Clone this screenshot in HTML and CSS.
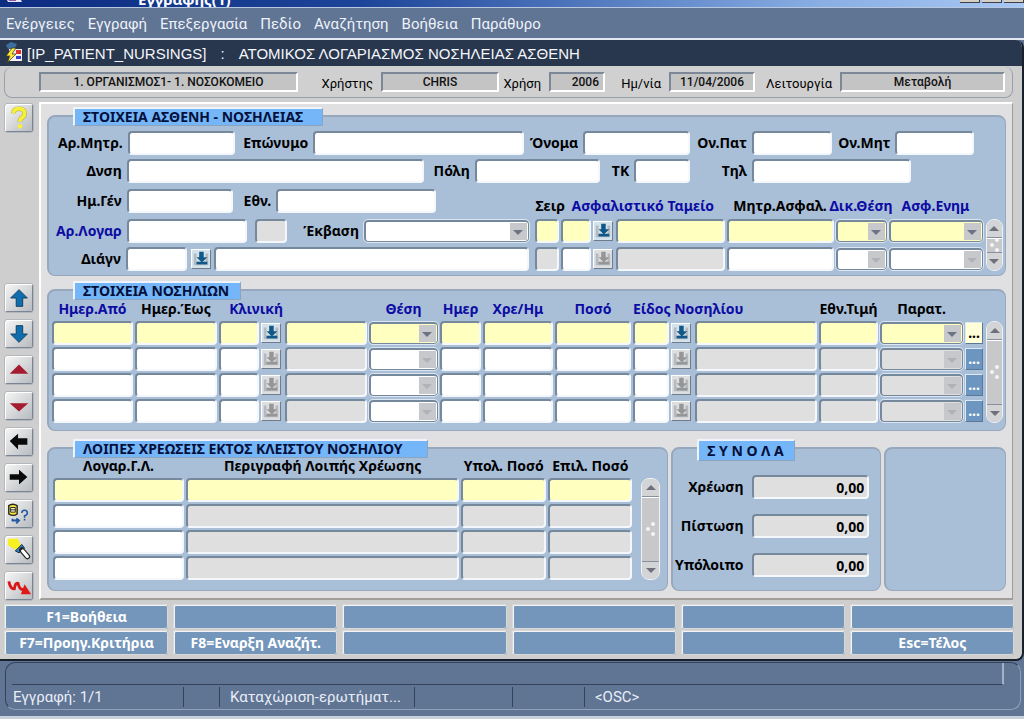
FILE: index.html
```html
<!DOCTYPE html>
<html lang="el">
<head>
<meta charset="utf-8">
<title>Ατομικός λογαριασμός νοσηλείας ασθενή</title>
<link rel="stylesheet" href="styles.css">
</head>
<body>
<svg class="defs" aria-hidden="true">
  <symbol id="i-pick" viewBox="0 0 20 20"><path d="M2 4h3v10h10V4h3v13H2z" fill="#b4bac0"/><path d="M8 2h5v6h4l-6 6-6-6h3z" fill="currentColor"/><path d="M5 13h12v3H5z" fill="currentColor"/></symbol>
  <symbol id="i-up" viewBox="0 0 28 28"><path d="M14 5l9 9h-5v9h-7v-9H5z" fill="#0f6fae" stroke="#123a5c"/></symbol>
  <symbol id="i-down" viewBox="0 0 28 28"><path d="M14 23l9-9h-5V5h-7v9H5z" fill="#0f6fae" stroke="#123a5c"/></symbol>
</svg>
<div class="app">
  <header class="titlebar">
    <svg class="title-icon" viewBox="0 0 18 6"><path d="M1 0h14l2 4H3z" fill="#e8e2f4"/><path d="M3 1h8v2H4z" fill="#8a5aa8"/></svg>
    <span class="title-text">Εγγραφής(1)</span>
    <div class="win-buttons"><span></span><span></span><span></span></div>
  </header>
  <nav class="menubar">
    <button>Ενέργειες</button><button>Εγγραφή</button><button>Επεξεργασία</button><button>Πεδίο</button><button>Αναζήτηση</button><button>Βοήθεια</button><button>Παράθυρο</button>
  </nav>

  <main class="window">
    <div class="window-title">
      <svg class="form-icon" viewBox="0 0 20 22"><path d="M2 3l5-3 6 2-2 4-7 1z" fill="#3c6f9f"/><path d="M5 7h13v12H5z" fill="#f4f0f4"/><path d="M12 8h5v4h-5z" fill="#e03030"/><path d="M12 14h5v3h-5z" fill="#3344cc"/><path d="M8 6l-6 8h4l-3 7 9-9H8l4-6z" fill="#ffe838" stroke="#3a3010" stroke-width=".7"/></svg>
      <h1><span>[IP_PATIENT_NURSINGS]</span><span>:</span><span>ΑΤΟΜΙΚΟΣ ΛΟΓΑΡΙΑΣΜΟΣ ΝΟΣΗΛΕΙΑΣ ΑΣΘΕΝΗ</span></h1>
    </div>

    <div class="info">
      <input class="info-field" aria-label="Οργανισμός" readonly value="1. ΟΡΓΑΝΙΣΜΟΣ1- 1. ΝΟΣΟΚΟΜΕΙΟ">
      <label for="user">Χρήστης</label><input class="info-field" id="user" readonly value="CHRIS">
      <label for="year">Χρήση</label><input class="info-field end" id="year" readonly value="2006">
      <label for="date">Ημ/νία</label><input class="info-field" id="date" readonly value="11/04/2006">
      <label for="mode">Λειτουργία</label><input class="info-field" id="mode" readonly value="Μεταβολή">
    </div>

    <div class="body">
      <aside class="tools">
        <button aria-label="Βοήθεια"><svg viewBox="0 0 28 28"><path d="M8 9q0-5 6-5t6 5q0 3-3 5-2 1-2 4" fill="none" stroke="#a8a838" stroke-width="5"/><path d="M8 9q0-5 6-5t6 5q0 3-3 5-2 1-2 4" fill="none" stroke="#f6f03c" stroke-width="4"/><circle cx="15" cy="23" r="2.5" fill="#f6f03c"/></svg></button>
        <button class="push" aria-label="Πάνω"><svg><use href="#i-up"/></svg></button>
        <button aria-label="Κάτω"><svg><use href="#i-down"/></svg></button>
        <button aria-label="Προηγούμενη σελίδα"><svg viewBox="0 0 28 28"><path d="M14 8l10 10H4z" fill="#a41c30"/></svg></button>
        <button aria-label="Επόμενη σελίδα"><svg viewBox="0 0 28 28"><path d="M14 20l10-9H4z" fill="#a41c30"/></svg></button>
        <button aria-label="Πίσω"><svg viewBox="0 0 28 28"><path d="M4 13l9-8v5h10v7H13v5z" fill="#0a0a0a"/></svg></button>
        <button aria-label="Εμπρός"><svg viewBox="0 0 28 28"><path d="M23 13l-9-8v5H4v6h10v5z" fill="#0a0a0a"/></svg></button>
        <button aria-label="Ερώτημα"><svg viewBox="0 0 28 28"><path d="M3 5q4-3 9 0v9q-4 3-9 0z" fill="#f2e43c" stroke="#222" stroke-width="1.5"/><path d="M5 7h5v5H5z" fill="#fffbd0" stroke="#222"/><path d="M5 9.500h5" stroke="#222"/><path d="M7 19v2h6m-2-2l3 2-3 3" fill="none" stroke="#2458a0" stroke-width="2"/><path d="M17 13q0-3 3-3t3 3q0 2-3 3v2m0 1v2" fill="none" stroke="#2458a0" stroke-width="1.700"/></svg></button>
        <button aria-label="Αναζήτηση"><svg viewBox="0 0 28 28"><path d="M2 2h11l3 8-5 4-9-5z" fill="#f8f020"/><path d="M17 8l-7 7 4 2 6-5z" fill="#2f86c8" stroke="#102040"/><path d="M17 14l6 7" stroke="#222" stroke-width="6" stroke-linecap="round"/><path d="M18 15l5 6" stroke="#fff" stroke-width="3.500" stroke-linecap="round"/></svg></button>
        <button aria-label="Έξοδος"><svg viewBox="0 0 28 28"><path d="M3 9q2 9 6 8 1-7 4-6 1 6 5 7l4 1" fill="none" stroke="#d81818" stroke-width="3"/><path d="M20 12l7 11-11 0z" fill="#e01818"/></svg></button>
      </aside>

      <div class="canvas">
        <section class="panel patient">
          <h2 class="tag w-patient">ΣΤΟΙΧΕΙΑ ΑΣΘΕΝΗ - ΝΟΣΗΛΕΙΑΣ</h2>
          <div class="row r1">
            <label for="reg">Αρ.Μητρ.</label><input id="reg">
            <label for="surname">Επώνυμο</label><input id="surname">
            <label for="name">Όνομα</label><input id="name">
            <label for="father">Ον.Πατ</label><input id="father">
            <label for="mother">Ον.Μητ</label><input id="mother">
          </div>
          <div class="row r2">
            <label for="addr">Δνση</label><input id="addr">
            <label for="city">Πόλη</label><input id="city">
            <label for="zip">ΤΚ</label><input id="zip">
            <label for="tel">Τηλ</label><input id="tel">
          </div>
          <div class="split">
            <div class="left">
              <div class="row r3"><label for="birth">Ημ.Γέν</label><input id="birth"><label for="nat">Εθν.</label><input id="nat"></div>
              <div class="row r4"><label class="blue" for="acc">Αρ.Λογαρ</label><input id="acc"><span></span><input class="off" aria-label="Ένδειξη" readonly><label for="outcome">Έκβαση</label><div class="drop"><select id="outcome"><option></option></select></div></div>
              <div class="row r5"><label for="diag">Διάγν</label><input id="diag"><button class="pick on" aria-label="Επιλογή διάγνωσης"><svg><use href="#i-pick"/></svg></button><input aria-label="Περιγραφή διάγνωσης"></div>
            </div>
            <div class="grid-wrap">
              <table class="insurance">
                <colgroup><col class="c26"><col class="c32"><col class="c23"><col class="c110"><col class="c109"><col class="c53"><col class="c96"></colgroup>
                <thead><tr><th class="flush">Σειρ</th><th class="blue start" colspan="3">Ασφαλιστικό Ταμείο</th><th>Μητρ.Ασφαλ.</th><th class="blue over"><span>Δικ.Θέση</span></th><th class="blue">Ασφ.Ενημ</th></tr></thead>
                <tbody>
                  <tr class="cur"><td><input aria-label="Σειρ"></td><td><input aria-label="Κωδικός ταμείου"></td><td><button class="pick on" aria-label="Επιλογή ταμείου"><svg><use href="#i-pick"/></svg></button></td><td><input aria-label="Ταμείο"></td><td><input aria-label="Μητρ.Ασφαλ."></td><td><div class="drop"><select aria-label="Δικ.Θέση"><option></option></select></div></td><td><div class="drop"><select aria-label="Ασφ.Ενημ"><option></option></select></div></td></tr>
                  <tr><td><input class="off" aria-label="Σειρ"></td><td><input aria-label="Κωδικός ταμείου"></td><td><button class="pick" aria-label="Επιλογή ταμείου"><svg><use href="#i-pick"/></svg></button></td><td><input class="off" aria-label="Ταμείο"></td><td><input aria-label="Μητρ.Ασφαλ."></td><td><div class="drop dim"><select aria-label="Δικ.Θέση"><option></option></select></div></td><td><div class="drop dim"><select aria-label="Ασφ.Ενημ"><option></option></select></div></td></tr>
                </tbody>
              </table>
              <div class="scroll"><button class="sc-up" aria-label="Πάνω"></button><div class="thumb"><i></i><i></i><i></i></div><button class="sc-down" aria-label="Κάτω"></button></div>
            </div>
          </div>
        </section>

        <section class="panel stay">
          <h2 class="tag w-stay">ΣΤΟΙΧΕΙΑ ΝΟΣΗΛΙΩΝ</h2>
          <div class="grid-wrap">
            <table>
              <colgroup><col class="c83"><col class="c84"><col class="c42"><col class="c24"><col class="c84"><col class="c71"><col class="c43"><col class="c72"><col class="c78"><col class="c38"><col class="c24"><col class="c124"><col class="c61"><col class="c85"><col class="c20"></colgroup>
              <thead><tr><th class="blue">Ημερ.Από</th><th>Ημερ.Έως</th><th class="blue end" colspan="2">Κλινική</th><th></th><th class="blue">Θέση</th><th class="blue">Ημερ</th><th class="blue">Χρε/Ημ</th><th class="blue">Ποσό</th><th class="blue flush" colspan="3">Είδος Νοσηλίου</th><th>Εθν.Τιμή</th><th>Παρατ.</th><th></th></tr></thead>
              <tbody>
                <tr class="cur"><td><input aria-label="Ημερ.Από"></td><td><input aria-label="Ημερ.Έως"></td><td><input aria-label="Κλινική"></td><td><button class="pick on" aria-label="Επιλογή κλινικής"><svg><use href="#i-pick"/></svg></button></td><td><input aria-label="Όνομα κλινικής"></td><td><div class="drop"><select aria-label="Θέση"><option></option></select></div></td><td><input aria-label="Ημερ"></td><td><input aria-label="Χρε/Ημ"></td><td><input aria-label="Ποσό"></td><td><input aria-label="Είδος"></td><td><button class="pick on" aria-label="Επιλογή είδους"><svg><use href="#i-pick"/></svg></button></td><td><input aria-label="Νοσήλιο"></td><td><input aria-label="Εθν.Τιμή"></td><td><div class="drop"><select aria-label="Παρατ."><option></option></select></div></td><td><button class="more">...</button></td></tr>
                <tr><td><input aria-label="Ημερ.Από"></td><td><input aria-label="Ημερ.Έως"></td><td><input aria-label="Κλινική"></td><td><button class="pick" aria-label="Επιλογή κλινικής"><svg><use href="#i-pick"/></svg></button></td><td><input class="off" aria-label="Όνομα κλινικής"></td><td><div class="drop dim"><select aria-label="Θέση"><option></option></select></div></td><td><input aria-label="Ημερ"></td><td><input aria-label="Χρε/Ημ"></td><td><input aria-label="Ποσό"></td><td><input aria-label="Είδος"></td><td><button class="pick" aria-label="Επιλογή είδους"><svg><use href="#i-pick"/></svg></button></td><td><input class="off" aria-label="Νοσήλιο"></td><td><input class="off" aria-label="Εθν.Τιμή"></td><td><div class="drop dim"><select class="off" aria-label="Παρατ."><option></option></select></div></td><td><button class="more">...</button></td></tr>
                <tr><td><input aria-label="Ημερ.Από"></td><td><input aria-label="Ημερ.Έως"></td><td><input aria-label="Κλινική"></td><td><button class="pick" aria-label="Επιλογή κλινικής"><svg><use href="#i-pick"/></svg></button></td><td><input class="off" aria-label="Όνομα κλινικής"></td><td><div class="drop dim"><select aria-label="Θέση"><option></option></select></div></td><td><input aria-label="Ημερ"></td><td><input aria-label="Χρε/Ημ"></td><td><input aria-label="Ποσό"></td><td><input aria-label="Είδος"></td><td><button class="pick" aria-label="Επιλογή είδους"><svg><use href="#i-pick"/></svg></button></td><td><input class="off" aria-label="Νοσήλιο"></td><td><input class="off" aria-label="Εθν.Τιμή"></td><td><div class="drop dim"><select class="off" aria-label="Παρατ."><option></option></select></div></td><td><button class="more">...</button></td></tr>
                <tr><td><input aria-label="Ημερ.Από"></td><td><input aria-label="Ημερ.Έως"></td><td><input aria-label="Κλινική"></td><td><button class="pick" aria-label="Επιλογή κλινικής"><svg><use href="#i-pick"/></svg></button></td><td><input class="off" aria-label="Όνομα κλινικής"></td><td><div class="drop dim"><select aria-label="Θέση"><option></option></select></div></td><td><input aria-label="Ημερ"></td><td><input aria-label="Χρε/Ημ"></td><td><input aria-label="Ποσό"></td><td><input aria-label="Είδος"></td><td><button class="pick" aria-label="Επιλογή είδους"><svg><use href="#i-pick"/></svg></button></td><td><input class="off" aria-label="Νοσήλιο"></td><td><input class="off" aria-label="Εθν.Τιμή"></td><td><div class="drop dim"><select class="off" aria-label="Παρατ."><option></option></select></div></td><td><button class="more">...</button></td></tr>
              </tbody>
            </table>
            <div class="scroll"><button class="sc-up" aria-label="Πάνω"></button><div class="thumb"><i></i><i></i><i></i></div><button class="sc-down" aria-label="Κάτω"></button></div>
          </div>
        </section>

        <div class="bottom">
          <section class="panel charges">
            <h2 class="tag w-charges">ΛΟΙΠΕΣ ΧΡΕΩΣΕΙΣ ΕΚΤΟΣ ΚΛΕΙΣΤΟΥ ΝΟΣΗΛΙΟΥ</h2>
            <div class="grid-wrap">
              <table>
                <colgroup><col class="c133"><col class="c275"><col class="c87"><col class="c86"></colgroup>
                <thead><tr><th>Λογαρ.Γ.Λ.</th><th>Περιγραφή Λοιπής Χρέωσης</th><th>Υπολ. Ποσό</th><th>Επιλ. Ποσό</th></tr></thead>
                <tbody>
                  <tr class="cur"><td><input aria-label="Λογαρ.Γ.Λ."></td><td><input aria-label="Περιγραφή"></td><td><input aria-label="Υπολ. Ποσό"></td><td><input aria-label="Επιλ. Ποσό"></td></tr>
                  <tr><td><input aria-label="Λογαρ.Γ.Λ."></td><td><input class="off" aria-label="Περιγραφή"></td><td><input class="off" aria-label="Υπολ. Ποσό"></td><td><input class="off" aria-label="Επιλ. Ποσό"></td></tr>
                  <tr><td><input aria-label="Λογαρ.Γ.Λ."></td><td><input class="off" aria-label="Περιγραφή"></td><td><input class="off" aria-label="Υπολ. Ποσό"></td><td><input class="off" aria-label="Επιλ. Ποσό"></td></tr>
                  <tr><td><input aria-label="Λογαρ.Γ.Λ."></td><td><input class="off" aria-label="Περιγραφή"></td><td><input class="off" aria-label="Υπολ. Ποσό"></td><td><input class="off" aria-label="Επιλ. Ποσό"></td></tr>
                </tbody>
              </table>
              <div class="scroll wide"><button class="sc-up" aria-label="Πάνω"></button><div class="thumb"><i></i><i></i><i></i></div><button class="sc-down" aria-label="Κάτω"></button></div>
            </div>
          </section>
          <section class="panel totals">
            <h2 class="tag w-totals">Σ Υ Ν Ο Λ Α</h2>
            <label for="debit">Χρέωση</label><input class="off" id="debit" readonly value="0,00">
            <label for="credit">Πίστωση</label><input class="off" id="credit" readonly value="0,00">
            <label for="rest">Υπόλοιπο</label><input class="off" id="rest" readonly value="0,00">
          </section>
          <section class="panel blank"></section>
        </div>
      </div>
    </div>

    <div class="keys">
      <button>F1=Βοήθεια</button><button aria-label="Κενό"></button><button aria-label="Κενό"></button><button aria-label="Κενό"></button><button aria-label="Κενό"></button><button aria-label="Κενό"></button>
      <button>F7=Προηγ.Κριτήρια</button><button>F8=Εναρξη Αναζήτ.</button><button aria-label="Κενό"></button><button aria-label="Κενό"></button><button aria-label="Κενό"></button><button>Esc=Τέλος</button>
    </div>
  </main>

  <footer class="status">
    <div class="status-box">
      <div class="message"></div>
      <div class="cells"><span>Εγγραφή: 1/1</span><span></span><span>Καταχώριση-ερωτήματ...</span><span></span><span></span><span>&lt;OSC&gt;</span></div>
    </div>
  </footer>
</div>
</body>
</html>
```
FILE: styles.css
```css
* { box-sizing: border-box; }
body { margin: 0; font-family: "Noto Sans", "Open Sans", sans-serif; font-size: 14px; color: #000; background: #607493; }
button, input, select { font: inherit; margin: 0; padding: 0; border-radius: 0; min-width: 0; }
.defs { position: absolute; width: 0; height: 0; }
.app { display: flex; flex-direction: column; min-height: 100vh; }

/* Title and menu */
.titlebar { display: flex; align-items: flex-end; height: 8px; overflow: hidden; background: linear-gradient(90deg, #0c2c80, #1c4498 35%, #88aee4 80%, #a8c8f4); border-bottom: 1px solid #b8c8e0; }
.title-icon { width: 18px; height: 6px; margin: 0 115px 3px 5px; }
.title-text { color: #fff; font-weight: bold; font-size: 15px; line-height: 16px; }
.win-buttons { display: flex; gap: 2px; margin-left: auto; padding-bottom: 4px; }
.win-buttons span { width: 20px; height: 12px; background: #d4d0c8; border-right: 1px solid #404040; border-bottom: 1px solid #404040; }
.menubar { display: flex; gap: 13px; align-items: center; height: 32px; padding: 2px 6px 0; background: #607493; border-bottom: 2px solid #e4e8f0; }
.menubar button { border: 0; background: none; color: #eef2fa; font-family: Roboto, sans-serif; font-size: 15px; white-space: nowrap; }

/* Form window */
.window { display: flex; flex-direction: column; flex: 1; background: #cecece; border-right: 2px solid #18202c; border-bottom: 2px solid #18202c; border-radius: 0 8px 8px 0; overflow: hidden; }
.window-title { display: flex; align-items: center; gap: 3px; height: 26px; padding-left: 4px; background: #28364e; color: #f4f6fa; }
.form-icon { width: 20px; height: 22px; }
h1 { display: flex; gap: 14px; margin: 0; font: 15px "Liberation Sans", Arial, sans-serif; white-space: nowrap; }

.info { display: grid; grid-template-columns: minmax(0, 259fr) minmax(0, 83fr) minmax(0, 118fr) minmax(0, 50fr) minmax(0, 56fr) minmax(0, 64fr) minmax(0, 86fr) minmax(0, 85fr) minmax(0, 165fr); align-items: center; height: 31px; margin: 1px 9px 0 4px; padding: 0 7px 0 34px; border: 1px solid #98a0ac; border-top: 0; border-radius: 8px; background: #d0d0d0; }
.info label { padding: 2px 8px 0 0; text-align: right; font-family: Roboto, sans-serif; font-size: 13px; font-weight: normal; white-space: nowrap; }
.info-field { width: 100%; height: 20px; border: 2px solid; border-color: #7c8898 #fff #fff #7c8898; background: #c4c4c4; color: #111; text-align: center; font: 500 12px Roboto, sans-serif; }
.info-field.end { padding-right: 4px; text-align: right; }

.body { display: flex; flex: 1; padding: 4px 9px 4px 5px; }
.tools { display: flex; flex: none; flex-direction: column; gap: 8px; width: 34px; padding-top: 2px; }
.tools button { width: 28px; height: 28px; border: 1px solid; border-color: #fff #7a8494 #7a8494 #fff; outline: 1px solid #b4b8bc; border-radius: 2px; background: linear-gradient(135deg, #f4f4f4, #b8bcc0); }
.tools svg { display: block; width: 26px; height: 26px; }
.tools .push { margin-top: auto; }

.canvas { display: flex; flex: 1; min-width: 0; flex-direction: column; gap: 13px; padding: 11px 6px 7px; border: 1px solid; border-color: #fff #a09c98 #a09c98 #fff; border-width: 2px 1px 2px 2px; background: #e0e0e2; }
.panel { position: relative; padding: 0 3px; border: 2px solid #98a8bc; border-right-width: 1px; border-bottom-width: 1px; border-radius: 8px; background: #a9bed7; }
.tag { position: absolute; top: -10px; left: 24px; height: 19px; margin: 0; padding-left: 8px; border: 2px solid; border-color: #f0f4fa #8ca4c0 #8ca4c0 #f0f4fa; border-width: 2px 1px 1px 2px; background: #74b6f8; color: #04103c; font-size: 14px; line-height: 16px; white-space: nowrap; }
.w-patient { width: 250px; }
.w-stay { width: 168px; }
.w-charges { width: 355px; }
.w-totals { width: 98px; }
.totals .tag { height: 22px; line-height: 19px; }

.row label, .totals label, th { font-weight: bold; white-space: nowrap; line-height: 16px; }
.blue { color: #0c0ca4; }

/* Fields */
.panel input, .drop select { display: block; width: 100%; height: 24px; border: 2px solid; border-color: #76889c #f4f8fc #f4f8fc #76889c; border-radius: 4px; background: #fff; }
.drop { position: relative; }
.drop select { appearance: none; border-color: #76889c; border-width: 2px 1px 1px 2px; outline: 1px solid #dce6f2; outline-offset: 0; height: 22px; }
.drop::before { content: ""; position: absolute; top: 3px; right: 2px; bottom: 2px; width: 17px; background: #c6c8cc; }
.drop::after { content: ""; position: absolute; top: 10px; right: 6px; border: 5px solid transparent; border-top-color: #6c7484; border-bottom: 0; }
.drop.dim::after { border-top-color: #b0b2b6; }
.cur input, .cur .drop select { background: #ffffc0; }
.panel .off, .drop .off { background: #dfdfe0; }
.pick { display: block; width: 20px; height: 20px; border: 1px solid; border-color: #fff #707c8c #707c8c #fff; background: #dcdee0; color: #969696; }
.pick.on { background: #d4e2ec; color: #105888; }
.pick svg { display: block; width: 18px; height: 18px; }
.more { display: block; width: 18px; height: 22px; border: 1px solid; border-color: #dce8f4 #5c7898 #5c7898 #dce8f4; background: #6c96c0; color: #fff; font-weight: bold; line-height: 20px; }
.cur .more { background: #ffffd8; color: #000; }

.row { display: grid; align-items: center; height: 28px; }
.row label { justify-self: end; padding-right: 5px; }
.patient { padding-top: 12px; padding-bottom: 2px; }
.r1 { grid-template-columns: minmax(0, 76fr) minmax(0, 108fr) minmax(0, 78fr) minmax(0, 211fr) minmax(0, 60fr) minmax(0, 107fr) minmax(0, 62fr) minmax(0, 80fr) minmax(0, 64fr) minmax(0, 79fr) minmax(0, 28fr); }
.r2 { grid-template-columns: minmax(0, 75fr) minmax(0, 298fr) minmax(0, 51fr) minmax(0, 126fr) minmax(0, 34fr) minmax(0, 56fr) minmax(0, 62fr) minmax(0, 160fr) minmax(0, 91fr); }
.split { display: flex; gap: 5px; align-items: flex-end; }
.left { flex: 480; min-width: 0; }
.patient .grid-wrap { flex: 468; min-width: 0; }
.r3 { grid-template-columns: minmax(0, 75fr) minmax(0, 107fr) minmax(0, 43fr) minmax(0, 160fr) minmax(0, 95fr); height: 31px; }
.r4 { grid-template-columns: minmax(0, 75fr) minmax(0, 121fr) minmax(0, 8fr) minmax(0, 32fr) minmax(0, 77fr) minmax(0, 166fr) minmax(0, 1fr); height: 29px; }
.r5 { grid-template-columns: minmax(0, 74fr) minmax(0, 61fr) minmax(0, 28fr) minmax(0, 316fr) minmax(0, 1fr); }
.r5 .pick { justify-self: center; }

/* Record grids */
.grid-wrap { display: flex; align-items: flex-end; gap: 1px; }
table { flex: 1; width: 100%; min-width: 0; table-layout: fixed; border-collapse: collapse; }
th { height: 19px; padding: 0 2px 3px 0; overflow: visible; }
th.start { padding-left: 10px; text-align: left; }
th.flush { text-align: left; }
th.end { text-align: right; }
th.over span { display: flex; justify-content: center; }
td { height: 26px; padding: 0 2px 0 0; vertical-align: middle; }
.insurance td { height: 28px; }
.insurance th { height: 20px; }
.stay { padding: 10px 3px 6px; }
.charges { padding: 9px 7px 8px 4px; }
.c20 { width: 20px; } .c23 { width: 23px; } .c24 { width: 24px; } .c26 { width: 26px; } .c32 { width: 32px; }
.c38 { width: 38px; } .c42 { width: 42px; } .c43 { width: 43px; } .c53 { width: 53px; } .c61 { width: 61px; }
.c71 { width: 71px; } .c72 { width: 72px; } .c78 { width: 78px; } .c83 { width: 83px; } .c84 { width: 84px; }
.c85 { width: 85px; } .c86 { width: 86px; } .c87 { width: 87px; } .c96 { width: 96px; } .c109 { width: 109px; }
.c110 { width: 110px; } .c124 { width: 124px; } .c133 { width: 133px; } .c275 { width: 275px; }

.scroll { display: flex; flex: none; flex-direction: column; width: 17px; height: 102px; margin-bottom: 1px; border: 1px solid #eef2f6; border-radius: 8px; background: #ccced0; overflow: hidden; }
.patient .scroll { height: 52px; margin-bottom: 2px; }
.scroll.wide { width: 19px; margin-left: 6px; }
.scroll button { position: relative; height: 17px; border: 0; background: #d2d4d6; }
.scroll button::after { content: ""; display: block; width: 0; margin: auto; border: 5px solid transparent; }
.scroll .sc-up::after { border-top: 0; border-bottom-color: #70707c; }
.scroll .sc-down::after { border-bottom: 0; border-top-color: #70707c; }
.thumb { display: grid; flex: 1; grid-template-columns: 4px 4px; grid-auto-rows: 4px; place-content: center; gap: 1px; border: solid #8890a0; border-width: 1px 0; box-shadow: inset 0 1px #fff; background: #c8c8ca; overflow: hidden; }
.thumb i { grid-column: 2; width: 4px; height: 4px; border-radius: 50%; background: #f4f4f4; }
.thumb i:nth-child(1) { grid-row: 1; }
.thumb i:nth-child(2) { grid-column: 1; grid-row: 2; }
.thumb i:nth-child(3) { grid-row: 3; }

.bottom { display: grid; flex: 1; grid-template-columns: minmax(0, 622fr) minmax(0, 210fr) minmax(0, 122fr); gap: 3px; margin-top: 3px; }
.totals { display: grid; grid-template-columns: minmax(0, 76fr) minmax(0, 119fr) minmax(0, 8fr); align-content: start; align-items: center; row-gap: 15px; padding-top: 26px; }
.totals label { grid-column: 1; justify-self: end; padding-right: 8px; }
.totals input { padding-right: 3px; text-align: right; font-weight: bold; }

.keys { display: grid; grid-template-columns: repeat(6, minmax(0, 1fr)); gap: 1px 5px; padding: 0 8px 4px 4px; }
.keys button { height: 25px; border: 2px solid; border-color: #f4f4f4 #8a98a8 #8a98a8 #f4f4f4; border-width: 2px 1px 1px 2px; outline: 1px solid #d8d8d8; outline-offset: -1px; border-radius: 3px; background: #7496ba; color: #fff; font-weight: bold; line-height: 20px; white-space: nowrap; }

/* Status line */
.status { padding: 1px 3px 6px 5px; background: #607493; border-bottom: 3px solid #c8d0dc; }
.status-box { border: 1px solid #8fa0bc; border-top-color: #34425c; border-left-color: #34425c; border-radius: 10px; }
.message { height: 22px; margin: 0 16px 0 6px; border-right: 2px solid #a4b2c8; border-bottom: 1px solid #34425c; }
.cells { display: grid; grid-template-columns: minmax(0, 172fr) minmax(0, 36fr) minmax(0, 195fr) minmax(0, 98fr) minmax(0, 72fr) minmax(0, 429fr); height: 24px; padding: 2px 6px; }
.cells span { padding-left: 10px; border-right: 1px solid #34425c; color: #e8eef8; font: 15px/20px Roboto, sans-serif; white-space: nowrap; }
.cells span:first-child { padding-left: 1px; }
.cells span:last-child { border: 0; }
```
